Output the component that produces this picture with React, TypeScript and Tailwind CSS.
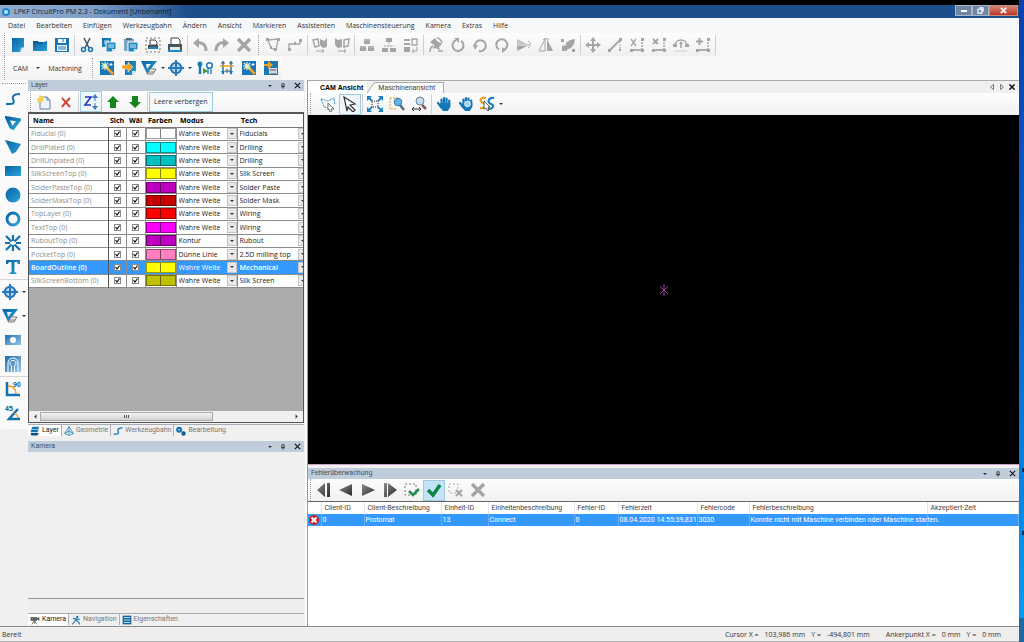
import { useState, type ReactNode } from "react";
import { clsx } from "clsx";

type IconProps = { children: ReactNode; className?: string };

function Icon({ children, className = "size-4" }: IconProps) {
  return (
    <svg viewBox="0 0 16 16" className={clsx("shrink-0", className)} fill="none" aria-hidden="true">
      {children}
    </svg>
  );
}

const BLUE = "url(#blue)";
const GRAY = "#a3a5a7";

// shared gradients
function Gradients() {
  return (
    <svg className="absolute size-0" aria-hidden="true">
      <defs>
        <linearGradient id="blue" x1="0" y1="0" x2="1" y2="1">
          <stop offset="0" stopColor="#0b62a4" />
          <stop offset="1" stopColor="#2aa3d8" />
        </linearGradient>
        <linearGradient id="pale" x1="0" y1="0" x2="1" y2="1">
          <stop offset="0" stopColor="#1b6fb0" />
          <stop offset="1" stopColor="#9cc4e2" />
        </linearGradient>
        <linearGradient id="metal" x1="0" y1="0" x2="1" y2="1">
          <stop offset="0" stopColor="#8a8a8a" />
          <stop offset="1" stopColor="#2c2c2c" />
        </linearGradient>
      </defs>
    </svg>
  );
}

const icons = {
  newDoc: (
    <>
      <path d="M2 1h12v9l-4 5H2z" fill={BLUE} />
      <path d="M10 15l1-4 3-1z" fill="#cfe6f4" />
    </>
  ),
  open: (
    <>
      <path d="M1 4h5l1 1h5l3-1v10H1z" fill="#0d5f96" />
      <path d="M1 7h9l2-2h3v9H1z" fill={BLUE} />
    </>
  ),
  save: (
    <>
      <path d="M1 1h14v14H1z" fill="#1777b5" />
      <path d="M4 2h8v4H4zM3 8h10v6H3z" fill="#f2f6f9" />
      <path d="M4 10h8M4 12h8M9 2v3" stroke="#1777b5" />
    </>
  ),
  cut: (
    <>
      <path d="M5 1l5 10M11 1L6 11" stroke="#4d565e" strokeWidth="1.6" />
      <circle cx="4.5" cy="12.5" r="2" stroke="#1777b5" strokeWidth="1.5" />
      <circle cx="11.5" cy="12.5" r="2" stroke="#1777b5" strokeWidth="1.5" />
    </>
  ),
  copy: (
    <>
      <path d="M1 1h9v9H1z" fill={BLUE} />
      <path d="M3 4h5M3 6h5" stroke="#cfe6f4" />
      <path d="M5 5h10v7l-3 3H5z" fill="#2189c4" stroke="#fff" />
      <path d="M7 8h6M7 10h6" stroke="#cfe6f4" />
      <path d="M11 15v-3h3z" fill="#e8f3fa" />
    </>
  ),
  paste: (
    <>
      <path d="M1 2h10v12H1z" fill="#7fa6c2" />
      <path d="M3 1h6v2H3z" fill="#4d6c82" />
      <path d="M5 5h10v7l-3 3H5z" fill="#2189c4" stroke="#fff" />
      <path d="M7 8h6M7 10h6" stroke="#cfe6f4" />
      <path d="M11 15v-3h3z" fill="#e8f3fa" />
    </>
  ),
  printSel: (
    <>
      <path d="M1 1h14v14H1z" stroke="#777" strokeDasharray="2 2" />
      <path d="M5 3h5l2 2v3H5z" fill="#fff" stroke="#444" />
      <path d="M3 8h10v4H3z" fill="#4b5358" />
      <path d="M4 10h8v2H4z" fill="#1f8ac6" />
    </>
  ),
  print: (
    <>
      <path d="M4 1h7l2 2v5H4z" fill="#fff" stroke="#444" />
      <path d="M1 7h14v7H1z" fill="#4b5358" />
      <path d="M3 10h10v3H3z" fill="#d8ecf7" />
      <path d="M1 13h14v2H1z" fill="#1f8ac6" />
    </>
  ),
  undo: (
    <>
      <path d="M1 6l6-5v10z" fill={GRAY} />
      <path d="M5 6c6-1 9 2 9 8" stroke={GRAY} strokeWidth="3" />
    </>
  ),
  redo: (
    <>
      <path d="M15 6L9 1v10z" fill={GRAY} />
      <path d="M11 6c-6-1-9 2-9 8" stroke={GRAY} strokeWidth="3" />
    </>
  ),
  cross: <path d="M2 2l12 12M14 2L2 14" stroke={GRAY} strokeWidth="3.5" />,
  poly: (
    <>
      <path d="M3 3l10-1-2 11-5-2z" stroke={GRAY} strokeWidth="1.3" />
      <path d="M1 1h3v3H1zM12 1h3v3h-3zM9 11h3v3H9zM5 9h2v3H5z" fill={GRAY} />
    </>
  ),
  step: (
    <>
      <path d="M2 12V7h11V3" stroke={GRAY} strokeWidth="1.3" />
      <path d="M1 11h3v3H1zM12 2h3v3h-3zM7 5h2v3H7z" fill={GRAY} />
    </>
  ),
  groupA: (
    <>
      <path d="M1 3l5-1 1 7-4 1z" stroke={GRAY} strokeWidth="1.5" />
      <path d="M8 2l4 2 3-3v9l-4 1-3-3z" fill={GRAY} />
      <path d="M4 14h8M10 12l2 2-2 2" stroke={GRAY} />
    </>
  ),
  groupB: (
    <>
      <path d="M1 1l3 2 4-1v8l-4 1-3-3z" fill={GRAY} />
      <path d="M10 3l5-1-1 7-4 1z" stroke={GRAY} strokeWidth="1.5" />
      <path d="M4 14h8M10 12l2 2-2 2" stroke={GRAY} />
    </>
  ),
  alignA: (
    <>
      <path d="M5 2h6v5H5zM1 9h6v5H1zM9 9h6v5H9z" fill={GRAY} />
      <path d="M5 3h6M1 10h6M9 10h6" stroke="#c4c4c4" />
    </>
  ),
  alignB: (
    <>
      <path d="M5 1h6v4H5zM1 11h6v4H1zM9 11h6v4H9z" fill={GRAY} />
      <path d="M8 5v4M3 9h10" stroke={GRAY} strokeDasharray="2 1" />
    </>
  ),
  alignC: (
    <>
      <path d="M1 2h6v2H1zM1 6h6v2H1zM1 10h6v5H1z" fill={GRAY} />
      <path d="M9 2h5v6H9z" stroke={GRAY} strokeWidth="1.3" />
      <path d="M14 10v4H9M11 12l-2 2 2 2" stroke={GRAY} />
    </>
  ),
  rotateFree: (
    <>
      <path d="M2 5l5-4 2 3 5 3-3 3 1 3-5-2-2 1 1-4z" fill={GRAY} />
      <path d="M2 15c0-3 1-5 3-6M9 1c3 0 4 2 5 5M10 14h5" stroke={GRAY} strokeWidth="1.5" />
    </>
  ),
  rotateCcw: (
    <>
      <path d="M6 3.300a5.500 5.500 0 1 0 5 .5" stroke={GRAY} strokeWidth="2" />
      <path d="M4 1h5v5z" fill={GRAY} />
    </>
  ),
  rotateCw: (
    <>
      <path d="M3 10a5.500 5.500 0 1 1 4 4" stroke={GRAY} strokeWidth="2" />
      <path d="M1 8h5l-3 5z" fill={GRAY} />
    </>
  ),
  rotate180: (
    <>
      <path d="M5 12.500a5.500 5.500 0 1 1 5 .3" stroke={GRAY} strokeWidth="2" />
      <path d="M8 10l4 3-4 3z" fill={GRAY} />
    </>
  ),
  flipV: (
    <>
      <path d="M1 2l10 5H1z" fill="#c4c5c6" />
      <path d="M1 14l10-5H1z" fill={GRAY} />
      <path d="M12 4c3 2 3 5 0 7M1 8h12" stroke={GRAY} />
    </>
  ),
  flipH: (
    <>
      <path d="M7 2v12H1z" stroke={GRAY} />
      <path d="M9 2v12h6z" fill={GRAY} />
      <path d="M5 3c1-2 5-2 6 0" stroke={GRAY} />
    </>
  ),
  scale: (
    <>
      <path d="M6 6l4-3 5-1-1 5-3 4-5 2z" fill={GRAY} />
      <path d="M1 2h3v3H1zM2 9l5-1v6H2zM12 12h3v3h-3z" fill={GRAY} />
    </>
  ),
  move: (
    <>
      <path d="M8 2v12M2 8h12" stroke={GRAY} strokeWidth="2" />
      <path d="M8 0l3 4H5zM8 16l3-4H5zM0 8l4-3v6zM16 8l-4-3v6z" fill={GRAY} />
    </>
  ),
  line: (
    <>
      <path d="M3 13L13 3" stroke={GRAY} strokeWidth="1.8" />
      <path d="M13 4v9" stroke={GRAY} strokeDasharray="2 1" />
      <path d="M1 12h3v3H1zM12 1h3v3h-3zM12 12h2v2h-2z" fill={GRAY} />
    </>
  ),
  nodeCut: (
    <>
      <path d="M2 2l5 7M7 2L2 9" stroke={GRAY} strokeWidth="1.3" />
      <path d="M2 13h11" stroke={GRAY} strokeWidth="1.8" />
      <path d="M13 2v10" stroke={GRAY} strokeWidth="1.5" strokeDasharray="2 1" />
      <path d="M1 12h3v3H1zM12 12h3v3h-3zM12 1h3v3h-3z" fill={GRAY} />
    </>
  ),
  nodeDel: (
    <>
      <path d="M2 2l5 5M7 2L2 7" stroke={GRAY} strokeWidth="1.8" />
      <path d="M2 13h11" stroke={GRAY} strokeWidth="1.8" />
      <path d="M13 2v10" stroke={GRAY} strokeWidth="1.5" strokeDasharray="2 1" />
      <path d="M1 12h3v3H1zM12 12h3v3h-3zM12 1h3v3h-3z" fill={GRAY} />
    </>
  ),
  arc: (
    <>
      <path d="M2 9c0-8 12-8 12 0M8 6v5" stroke={GRAY} strokeWidth="1.600" />
      <path d="M0 7h4v3H0zM12 7h4v3h-4zM6 7l2-3 2 3z" fill={GRAY} />
      <path d="M2 14h12" stroke="#ccc" />
    </>
  ),
  nodeAdd: (
    <>
      <path d="M4.500 1v7M1 4.500h7" stroke={GRAY} strokeWidth="2" />
      <path d="M2 13h11" stroke={GRAY} strokeWidth="1.8" />
      <path d="M13 2v10" stroke={GRAY} strokeWidth="1.5" strokeDasharray="2 1" />
      <path d="M1 12h3v3H1zM12 12h3v3h-3zM12 1h3v3h-3z" fill={GRAY} />
    </>
  ),
  wizard: (
    <>
      <path d="M1 1h14v14H1z" fill="#1877b4" />
      <path d="M7 7l7 7" stroke="#f0a52c" strokeWidth="2.500" />
      <path d="M6 2v8M2 6h8M3 3l6 6M9 3L3 9" stroke="#e6f3c8" strokeWidth="1.200" />
      <path d="M12 3v3M10.500 4.500h3" stroke="#fff" />
    </>
  ),
  importDoc: (
    <>
      <path d="M4 1h11v10l-4 4H4z" fill={BLUE} />
      <path d="M11 15v-4h4z" fill="#d6e9f5" />
      <path d="M1 5h6V2l5 5-5 5V9H1z" fill="#f2a024" stroke="#fff" strokeWidth=".5" />
    </>
  ),
  ruboutArea: (
    <>
      <path d="M0 1h16L6 14z" fill={BLUE} />
      <path d="M5 4h5L6 9z" fill="#e8f2f8" />
      <path d="M9 9h6l-3 5H6z" fill="#f5f5f5" stroke="#777" />
      <path d="M7 12h6" stroke="#777" />
    </>
  ),
  fiducial: (
    <>
      <circle cx="8" cy="8" r="5.200" fill="#bcd6ea" stroke="#2878b8" strokeWidth="2" />
      <path d="M8 0v16M0 8h16" stroke="#2878b8" strokeWidth="2" />
    </>
  ),
  toolPath: (
    <>
      <circle cx="3" cy="4" r="2.500" fill={BLUE} />
      <path d="M3 4v10" stroke="#1777b5" strokeWidth="2.500" />
      <path d="M6 8l5 3-5 3z" fill="#35a13a" />
      <path d="M11 14V9M14 14V9" stroke="#1777b5" strokeWidth="1.300" />
      <circle cx="12.500" cy="5.500" r="2.800" stroke="#1777b5" strokeWidth="1.500" />
    </>
  ),
  spindle: (
    <>
      <path d="M4 1v13M12 1v13" stroke="#1777b5" strokeWidth="1.500" />
      <path d="M1 6h14" stroke="#f09c20" strokeWidth="1.500" />
      <path d="M2 3h4M10 3h4M6 11h5M8 9v4" stroke="#555" />
      <path d="M2 11h4l-2 4zM10 11h4l-2 4z" fill="#1777b5" />
    </>
  ),
  exportBoard: (
    <>
      <path d="M1 1h14v14H1z" fill="#1877b4" />
      <path d="M6 8h8v6H6z" fill="#d5dade" />
      <path d="M1 4h4V1l5 4-5 4V6H1z" fill="#f2a024" />
      <path d="M7 10h6M7 14h6" stroke="#555" />
    </>
  ),
  curve: <path d="M1 13h4c5 0 4-3 3-5s0-5 7-5" stroke="#1372ad" strokeWidth="2" />,
  polyOpen: <path d="M2 3l12 2-6 8-2-1z" stroke={BLUE} strokeWidth="3.500" />,
  polyFill: <path d="M0 1l16 4-5 8-4 2z" fill={BLUE} />,
  rect: <path d="M0 3h16v10H0z" fill={BLUE} />,
  disc: <circle cx="8" cy="8" r="7.500" fill={BLUE} />,
  ring: <circle cx="8" cy="8" r="6" stroke={BLUE} strokeWidth="3" />,
  burst: (
    <>
      <path d="M8 0v6M8 10v6M0 8h5M11 8h5" stroke="#1172ad" strokeWidth="2.200" />
      <path d="M1 1l5.500 5.500M9.500 9.500L15 15M15 1L9.500 6.500M6.500 9.500L1 15" stroke="#1172ad" strokeWidth="2.200" />
    </>
  ),
  text: <path d="M1 1h14v4h-2l-1-2H9.500v10l2 1v1h-7v-1l2-1V3H4L3 5H1z" fill={BLUE} />,
  pocket: (
    <>
      <path d="M0 3h16v10H0z" fill="url(#pale)" />
      <circle cx="8" cy="8" r="3" fill="#fff" />
    </>
  ),
  contour: (
    <>
      <path d="M0 0h16v16H0z" fill="url(#pale)" />
      <path d="M3 16V7a5 5 0 0 1 10 0v9M6.500 16v-6a3 3 0 1 1 3 0v6" stroke="#fff" />
    </>
  ),
  angle90: (
    <>
      <path d="M2 1v13h13" stroke="#1372ad" strokeWidth="2.500" />
      <path d="M3 5c5 0 8 3 8 8" stroke="#f09c20" strokeWidth="1.300" />
      <text x="8" y="6" fontSize="7" fontWeight="700" fontFamily="Liberation Sans, sans-serif" fill="#14587f">90</text>
    </>
  ),
  angle45: (
    <>
      <path d="M13 4L4 14h11" stroke="#1372ad" strokeWidth="2.500" />
      <path d="M9 8c3 1 4 3 4 5" stroke="#f09c20" strokeWidth="1.300" />
      <text x="0" y="6" fontSize="7" fontWeight="700" fontFamily="Liberation Sans, sans-serif" fill="#14587f">45</text>
    </>
  ),
  newLayer: (
    <>
      <path d="M4 3h7l3 3v9H4z" fill="#eef3fb" stroke="#6b7ea8" />
      <path d="M11 3v3h3" stroke="#6b7ea8" />
      <path d="M4 0l1 3 3-1-1 3 2 1-3 1v3L4 8 1 9l1-3-2-1 3-1z" fill="#f4d34a" />
    </>
  ),
  deleteRed: <path d="M4 4c2 2 5 6 8 9M12 4C9 7 6 10 4 13" stroke="#d43a26" strokeWidth="1.800" />,
  sort: (
    <>
      <path d="M2 3h6L2 11h6" stroke="#2233c8" strokeWidth="1.600" />
      <path d="M12 2v12" stroke="#3b78c8" strokeDasharray="5 2" />
      <path d="M12 0l3 4H9zM12 16l3-4H9z" fill="#3b78c8" />
    </>
  ),
  up: <path d="M8 2l6 6h-3v6H5V8H2z" fill="#12861a" />,
  down: <path d="M8 14l6-6h-3V2H5v6H2z" fill="#12861a" />,
  lassoPick: (
    <>
      <path d="M1 3l7 2 6-3 1 7M1 3l3 8 5 1" stroke="#2d8fc4" strokeDasharray="2 1" />
      <path d="M8 7l6 6h-3l1 2-2 1-1-3-1 1z" fill="#fff" stroke="#555" strokeWidth=".8" />
    </>
  ),
  pointer: <path d="M2 1l11 7-5 1 5 5-2 2-5-5-1 4z" fill="#fff" stroke="#333" strokeWidth="1.200" />,
  fit: (
    <>
      <path d="M5 5h6v6H5z" stroke="#222" strokeDasharray="1 1" />
      <path d="M1 1l4 4M15 1l-4 4M1 15l4-4M15 15l-4-4" stroke="#1b80bd" strokeWidth="1.800" />
      <path d="M0 0h5L0 5zM16 0v5l-5-5zM0 16v-5l5 5zM16 16h-5l5-5z" fill="#1b80bd" />
    </>
  ),
  zoomSel: (
    <>
      <path d="M1 2h8M1 2v11h7" stroke="#e0a238" strokeDasharray="2 1" />
      <path d="M11 9l4 5" stroke="#5a6a78" strokeWidth="2.500" />
      <circle cx="9" cy="6" r="3.800" fill="#61b3e6" stroke="#3b7dad" />
    </>
  ),
  zoomWidth: (
    <>
      <path d="M11 9l4 4" stroke="#7c5a5a" strokeWidth="2.500" />
      <circle cx="9" cy="5" r="4" fill="#c4ddf0" stroke="#6c86a0" />
      <path d="M1 13h9M3 11l-2 2 2 2M8 11l2 2-2 2" stroke="#333" />
    </>
  ),
  hand: (
    <>
      <path d="M5.500 3.500V9M8 2v7M10.500 2.500V9M13.200 4.500V10M2 7l3 4" stroke="#1478b8" strokeWidth="2.200" strokeLinecap="round" />
      <path d="M4.500 7h9.800v4l-2.500 4H7l-3-4z" fill="#1478b8" />
    </>
  ),
  handZoom: (
    <>
      <path d="M5.500 3.500V9M8 2v7M10.500 2.500V9M13.200 4.500V10M2 7l3 4" stroke="#1478b8" strokeWidth="2.200" strokeLinecap="round" />
      <path d="M4.500 7h9.800v4l-2.500 4H7l-3-4z" fill="#1478b8" />
      <circle cx="9.500" cy="8" r="2.800" fill="#9fd2f2" stroke="#e8f4fb" />
    </>
  ),
  snap: (
    <>
      <path d="M7 2C1 0 0 6 4 7s3 6-3 5" stroke="#f0a020" strokeWidth="2.200" />
      <path d="M15 2c-6-1-7 5-3 6s2 6-4 5" stroke="#1b80bd" strokeWidth="2.200" />
      <path d="M5 5l6 6H9l1 3-1 1-2-3-2 1z" fill="#fff" stroke="#333" strokeWidth=".8" />
    </>
  ),
  first: <path d="M1 8l8-7v14zM11 1h3v14h-3z" fill="url(#metal)" />,
  prev: <path d="M1 8l13-6v12z" fill="url(#metal)" />,
  next: <path d="M15 8L2 2v12z" fill="url(#metal)" />,
  last: <path d="M2 1h3v14H2zM6 1l9 7-9 7z" fill="url(#metal)" />,
  ackSel: (
    <>
      <path d="M1 2h11v11H1z" stroke="#777" strokeDasharray="2 2" />
      <path d="M5 9l4 4 6-6" stroke="#1d9150" strokeWidth="2.500" />
    </>
  ),
  ack: <path d="M2 8l5 5 7-10" stroke="#0b8547" strokeWidth="3.500" />,
  clearSel: (
    <>
      <path d="M1 2h9v9H1z" stroke="#aaa" strokeDasharray="2 2" />
      <path d="M8 8l6 6M14 8l-6 6" stroke={GRAY} strokeWidth="2.200" />
    </>
  ),
  layers: (
    <>
      <path d="M4 1h11l-2 4H2zM2 6h12l-2 4H1z" fill="#1474b0" />
      <path d="M1 11h13l-2 4H2z" fill="#0c4f80" />
    </>
  ),
  geometry: <path d="M8 1l7 11-7 3-7-3zM8 1v14M1 12l7-4 7 4" stroke="#2682bb" strokeWidth="1.300" />,
  gears: (
    <>
      <circle cx="5" cy="6" r="3" stroke="#1474b0" strokeWidth="3.500" />
      <circle cx="12" cy="12" r="2" stroke="#0c5688" strokeWidth="3" />
    </>
  ),
  camera: (
    <>
      <path d="M1 3h10v6H1zM11 5l4-2v6l-4-2z" fill="#555" />
      <path d="M7 9l-4 6M7 9l4 6M7 9v5" stroke="#555" strokeWidth="1.300" />
      <path d="M3 5h2M7 5h2" stroke="#eee" />
    </>
  ),
  navigate: (
    <>
      <circle cx="10" cy="3" r="2" fill="#2a7ab0" />
      <path d="M9 5L6 10l-4 5M7 8l5 3 2 4M3 5l6 2 5 0" stroke="#2a7ab0" strokeWidth="1.800" />
    </>
  ),
  properties: (
    <>
      <path d="M1 1h14v14H1z" fill="#14689f" />
      <path d="M3 4h10M3 8h10M3 12h10" stroke="#bfe0f2" strokeWidth="1.500" />
    </>
  ),
};

type IconName = keyof typeof icons;
type Item = { icon: IconName; label: string; menu?: boolean; active?: boolean } | "sep" | "grip";

const mainTools: Item[] = [
  { icon: "newDoc", label: "Neu" },
  { icon: "open", label: "Öffnen" },
  { icon: "save", label: "Speichern" },
  "sep",
  { icon: "cut", label: "Ausschneiden" },
  { icon: "copy", label: "Kopieren" },
  { icon: "paste", label: "Einfügen" },
  { icon: "printSel", label: "Auswahl drucken" },
  { icon: "print", label: "Drucken" },
  "sep",
  { icon: "undo", label: "Rückgängig" },
  { icon: "redo", label: "Wiederholen" },
  { icon: "cross", label: "Löschen" },
  "grip",
  { icon: "poly", label: "Polygon" },
  { icon: "step", label: "Linienzug" },
  "sep",
  { icon: "groupA", label: "Gruppieren" },
  { icon: "groupB", label: "Gruppe auflösen" },
  "sep",
  { icon: "alignA", label: "Ausrichten" },
  { icon: "alignB", label: "Verteilen" },
  { icon: "alignC", label: "Anordnen" },
  "sep",
  { icon: "rotateFree", label: "Frei drehen" },
  { icon: "rotateCcw", label: "Links drehen" },
  { icon: "rotateCw", label: "Rechts drehen" },
  { icon: "rotate180", label: "Um 180° drehen" },
  { icon: "flipV", label: "Vertikal spiegeln" },
  { icon: "flipH", label: "Horizontal spiegeln" },
  { icon: "scale", label: "Skalieren" },
  "sep",
  { icon: "move", label: "Verschieben" },
  { icon: "line", label: "Linie" },
  { icon: "nodeCut", label: "Trennen" },
  { icon: "nodeDel", label: "Punkt löschen" },
  { icon: "arc", label: "Bogen" },
  { icon: "nodeAdd", label: "Punkt hinzufügen" },
  "sep",
];

const camTools: Item[] = [
  { icon: "wizard", label: "Prozessplanung" },
  { icon: "importDoc", label: "Import" },
  { icon: "ruboutArea", label: "Rubout", menu: true },
  { icon: "fiducial", label: "Passermarke", menu: true },
  { icon: "toolPath", label: "Werkzeugbahn" },
  { icon: "spindle", label: "Werkzeuge" },
  { icon: "wizard", label: "Bearbeitungsassistent" },
  { icon: "exportBoard", label: "Export" },
];

const viewTools: Item[] = [
  { icon: "lassoPick", label: "Lasso" },
  { icon: "pointer", label: "Auswahl", active: true },
  "sep",
  { icon: "fit", label: "Einpassen" },
  { icon: "zoomSel", label: "Bereich zoomen" },
  { icon: "zoomWidth", label: "Breite zoomen" },
  "sep",
  { icon: "hand", label: "Schwenken" },
  { icon: "handZoom", label: "Zoomen" },
  { icon: "snap", label: "Fangen", menu: true },
];

const errorTools: Item[] = [
  { icon: "first", label: "Erster" },
  { icon: "prev", label: "Voriger" },
  { icon: "next", label: "Nächster" },
  { icon: "last", label: "Letzter" },
  { icon: "ackSel", label: "Auswahl akzeptieren" },
  { icon: "ack", label: "Alle akzeptieren", active: true },
  { icon: "clearSel", label: "Auswahl entfernen" },
  { icon: "cross", label: "Alle entfernen" },
];

const drawTools: Item[] = [
  { icon: "curve", label: "Kurve" },
  { icon: "polyOpen", label: "Polygon offen" },
  { icon: "polyFill", label: "Polygon gefüllt" },
  { icon: "rect", label: "Rechteck" },
  { icon: "disc", label: "Scheibe" },
  { icon: "ring", label: "Kreis" },
  { icon: "burst", label: "Pad" },
  { icon: "text", label: "Text" },
  "sep",
  { icon: "fiducial", label: "Passermarke", menu: true },
  { icon: "ruboutArea", label: "Rubout", menu: true },
  { icon: "pocket", label: "Tasche" },
  { icon: "contour", label: "Kontur" },
  "sep",
  { icon: "angle90", label: "Winkel 90" },
  { icon: "angle45", label: "Winkel 45" },
];

const menus = [
  "Datei", "Bearbeiten", "Einfügen", "Werkzeugbahn", "Ändern", "Ansicht",
  "Markieren", "Assistenten", "Maschinensteuerung", "Kamera", "Extras", "Hilfe",
];

const layers = [
  { name: "Fiducial", color: "#ffffff", mode: "Wahre Weite", tech: "Fiducials" },
  { name: "DrillPlated", color: "#00ffff", mode: "Wahre Weite", tech: "Drilling" },
  { name: "DrillUnplated", color: "#00c0c0", mode: "Wahre Weite", tech: "Drilling" },
  { name: "SilkScreenTop", color: "#ffff00", mode: "Wahre Weite", tech: "Silk Screen" },
  { name: "SolderPasteTop", color: "#c000c0", mode: "Wahre Weite", tech: "Solder Paste" },
  { name: "SolderMaskTop", color: "#c80000", mode: "Wahre Weite", tech: "Solder Mask" },
  { name: "TopLayer", color: "#ff0000", mode: "Wahre Weite", tech: "Wiring" },
  { name: "TextTop", color: "#ff00ff", mode: "Wahre Weite", tech: "Wiring" },
  { name: "RuboutTop", color: "#c000c0", mode: "Kontur", tech: "Rubout" },
  { name: "PocketTop", color: "#ff80c0", mode: "Dünne Linie", tech: "2.5D milling top" },
  { name: "BoardOutline", color: "#ffff00", mode: "Wahre Weite", tech: "Mechanical" },
  { name: "SilkScreenBottom", color: "#c0c000", mode: "Wahre Weite", tech: "Silk Screen" },
];

const errorColumns = [
  { title: "", width: "w-[13px]", value: "" },
  { title: "Client-ID", width: "w-[43px]", value: "0" },
  { title: "Client-Beschreibung", width: "w-[77px]", value: "Protomat" },
  { title: "Einheit-ID", width: "w-[47px]", value: "13" },
  { title: "Einheitenbeschreibung", width: "w-[86px]", value: "Connect" },
  { title: "Fehler-ID", width: "w-[44px]", value: "0" },
  { title: "Fehlerzeit", width: "w-[79px]", value: "08.04.2020 14:55:39,831" },
  { title: "Fehlercode", width: "w-[52px]", value: "3030" },
  { title: "Fehlerbeschreibung", width: "w-[178px]", value: "Konnte nicht mit Maschine verbinden oder Maschine starten." },
  { title: "Akzeptiert-Zeit", width: "", value: "" },
];

function Caret() {
  return (
    <svg viewBox="0 0 4 2" className="h-0.5 w-1 shrink-0" aria-hidden="true">
      <path d="M0 0h4L2 2z" fill="#333" />
    </svg>
  );
}

function Grip() {
  return <span className="mx-0.5 w-px self-stretch border-l border-dotted border-gray-400" />;
}

function ToolButton({ item }: { item: Exclude<Item, string> }) {
  return (
    <button
      type="button"
      aria-label={item.label}
      className={clsx(
        "flex h-[21px] shrink-0 items-center justify-center",
        item.menu ? "w-[27px] gap-1" : "w-[22px]",
        item.active && "border border-[#9ecbe0]",
        item.active && (item.icon === "ack" ? "bg-[#c4e2f8]" : "bg-[#eef6fb]")
      )}
    >
      <Icon className="size-4">{icons[item.icon]}</Icon>
      {item.menu && <Caret />}
    </button>
  );
}

function Tools({ items }: { items: Item[] }) {
  return (
    <>
      {items.map((item, i) => {
        if (item === "sep") return <span key={i} className="mx-px h-5 w-px shrink-0 bg-[#cfd2d4]" />;
        if (item === "grip") return <span key={i} className="mx-[3px] h-5 w-px border-l border-dotted border-gray-400" />;
        return <ToolButton key={i} item={item} />;
      })}
    </>
  );
}

function PanelHeader({ title }: { title: string }) {
  return (
    <header className="flex h-[11px] shrink-0 items-center bg-[#bfccd9] px-[3px] text-[#45525e]">
      <h2 className="flex-1 font-['Roboto',sans-serif] text-[7px]">{title}</h2>
      <div className="flex items-center gap-2">
        <button type="button" aria-label="Menü" className="flex h-2 w-1 items-center">
          <Caret />
        </button>
        <button type="button" aria-label="Anheften">
          <Icon className="size-[6px]">
            <path d="M5 2h6v7H5zM3 10h10M8 10v5" stroke="#222" strokeWidth="2" />
          </Icon>
        </button>
        <button type="button" aria-label="Schließen">
          <Icon className="size-[7px]">
            <path d="M2 2l12 12M14 2L2 14" stroke="#111" strokeWidth="2.500" />
          </Icon>
        </button>
      </div>
    </header>
  );
}

function CheckBox({ label }: { label: string }) {
  return (
    <span className="grid place-items-center">
      <input
        type="checkbox"
        defaultChecked
        aria-label={label}
        className="peer col-start-1 row-start-1 size-[7px] appearance-none border border-[#8a8a8a] bg-white"
      />
      <svg viewBox="0 0 7 7" className="pointer-events-none invisible col-start-1 row-start-1 size-[7px] peer-checked:visible" fill="none">
        <path d="M1.500 3l1.500 2 2.500-3.500" stroke="#111" strokeWidth="1.200" />
      </svg>
    </span>
  );
}

function CellSelect({ value, label }: { value: string; label: string }) {
  return (
    <span className="flex h-3 items-center">
      <select aria-label={label} defaultValue={value} className="min-w-0 flex-1 appearance-none bg-transparent pl-0.5">
        <option className="text-black">{value}</option>
      </select>
      <span className="flex h-[11px] w-[10px] shrink-0 items-center justify-center border border-[#c5c5c5] bg-[#e9e9e9]">
        <Caret />
      </span>
    </span>
  );
}

function LayerTable() {
  const [selected, setSelected] = useState("BoardOutline");
  return (
    <table className="h-[174px] w-full table-fixed border-collapse bg-white text-left text-[7px] leading-[9px]">
      <thead>
        <tr className="h-[13px] border-b border-[#777] bg-[#fbfbfb] text-black">
          <th className="w-[79px] pl-1">Name</th>
          <th className="w-[18px] whitespace-nowrap pl-0.5">Sich</th>
          <th className="w-[19px] whitespace-nowrap pl-[3px]">Wäl</th>
          <th className="w-[31px] pl-[3px]">Farben</th>
          <th className="w-[61px] pl-1">Modus</th>
          <th className="pl-1">Tech</th>
        </tr>
      </thead>
      <tbody>
        {layers.map((layer) => {
          const active = layer.name === selected;
          return (
            <tr
              key={layer.name}
              onClick={() => setSelected(layer.name)}
              className={clsx("border-b border-[#8c8c8c]", active ? "bg-[#3399ff] text-white" : "text-[#222]")}
            >
              <td className={clsx("border-r border-[#555] pl-0.5", active ? "font-semibold" : "text-[#8e8e8e]")}>
                {layer.name} (0)
              </td>
              <td className="border-r border-[#8c8c8c]"><CheckBox label={`${layer.name} sichtbar`} /></td>
              <td className="border-r border-[#8c8c8c]"><CheckBox label={`${layer.name} wählbar`} /></td>
              <td className="border-r border-[#8c8c8c]">
                <span className="flex h-[11px] divide-x divide-black/50 border border-black/40" style={{ backgroundColor: layer.color }}>
                  <span className="flex-1" />
                  <span className="flex-1" />
                </span>
              </td>
              <td className="border-r border-[#8c8c8c]"><CellSelect value={layer.mode} label={`${layer.name} Modus`} /></td>
              <td className={clsx("overflow-hidden", active && "font-semibold")}>
                <span className="-mr-[5px] block"><CellSelect value={layer.tech} label={`${layer.name} Tech`} /></span>
              </td>
            </tr>
          );
        })}
      </tbody>
    </table>
  );
}

type Tab = { icon: IconName; label: string };

function BottomTabs({ tabs }: { tabs: Tab[] }) {
  return (
    <div className="flex h-3 shrink-0 border-t border-[#a9adb1] font-['Roboto',sans-serif] text-[7px]">
      {tabs.map((tab, i) => (
        <button
          key={tab.label}
          type="button"
          className={clsx(
            "flex items-center gap-0.5 whitespace-nowrap border-r border-[#b0b0b0] px-0.5",
            i === 0 ? "bg-white text-[#222]" : "text-[#777]",
            i === tabs.length - 1 && "border-r-0"
          )}
        >
          <Icon className="size-[10px]">{icons[tab.icon]}</Icon>
          {tab.label}
        </button>
      ))}
    </div>
  );
}

function LeftPanels() {
  return (
    <div className="flex w-[277px] shrink-0 flex-col pr-px">
      <PanelHeader title="Layer" />
      <div className="flex h-[21px] shrink-0 items-center bg-gradient-to-b from-white to-[#f3f3f3]">
        <Grip />
        <Tools
          items={[
            { icon: "newLayer", label: "Neuer Layer" },
            { icon: "deleteRed", label: "Layer löschen" },
            "sep",
            { icon: "sort", label: "Sortieren", active: true },
            { icon: "up", label: "Nach oben" },
            { icon: "down", label: "Nach unten" },
            "sep",
          ]}
        />
        <button type="button" className="h-5 border border-[#9ecbe0] bg-[#f4f9fc] px-1 text-[7px]">
          Leere verbergen
        </button>
      </div>
      <div className="flex flex-1 flex-col border border-t-2 border-[#555] bg-[#ababab]">
        <LayerTable />
        <div className="mt-auto flex h-[11px] items-center bg-[#f0f0f0] px-1">
          <button type="button" aria-label="Nach links" className="w-[7px]">
            <Icon className="size-[5px]"><path d="M11 1L4 8l7 7z" fill="#333" /></Icon>
          </button>
          <div className="flex flex-1">
            <div className="flex h-[9px] w-[68%] items-center justify-center gap-px border border-[#aaa] bg-gradient-to-b from-[#f4f4f4] to-[#d2d2d2]">
              <span className="h-[3px] w-px bg-[#555]" />
              <span className="h-[3px] w-px bg-[#555]" />
              <span className="h-[3px] w-px bg-[#555]" />
            </div>
          </div>
          <button type="button" aria-label="Nach rechts">
            <Icon className="size-[5px]"><path d="M5 1l7 7-7 7z" fill="#333" /></Icon>
          </button>
        </div>
      </div>
      <div className="pt-px">
        <BottomTabs
          tabs={[
            { icon: "layers", label: "Layer" },
            { icon: "geometry", label: "Geometrie" },
            { icon: "curve", label: "Werkzeugbahn" },
            { icon: "gears", label: "Bearbeitung" },
          ]}
        />
      </div>
      <section className="mt-[5px] flex h-[185px] shrink-0 flex-col pb-px">
        <PanelHeader title="Kamera" />
        <div className="flex-1 border-b border-[#999]" />
        <div className="h-[14px] bg-[#f0eded]" />
        <BottomTabs
          tabs={[
            { icon: "camera", label: "Kamera" },
            { icon: "navigate", label: "Navigation" },
            { icon: "properties", label: "Eigenschaften" },
          ]}
        />
      </section>
    </div>
  );
}

function ErrorTable() {
  return (
    <table className="w-full table-fixed border-collapse text-left font-['Roboto',sans-serif] text-[7px] leading-[9px]">
      <thead>
        <tr className="h-3 text-[#444]">
          {errorColumns.map((col) => (
            <th key={col.title} className={clsx("whitespace-nowrap border-r border-[#e5e5e5] pl-[3px] font-normal", col.width)}>
              {col.title}
            </th>
          ))}
        </tr>
      </thead>
      <tbody>
        <tr className="h-3 bg-[#3399ff] text-white">
          {errorColumns.map((col, i) => (
            <td key={col.title} className="whitespace-nowrap border-r border-[#66b0fb] pl-px">
              {i === 0 ? (
                <Icon className="size-[10px]">
                  <circle cx="8" cy="8" r="8" fill="#cf2020" />
                  <path d="M4 4l8 8M12 4l-8 8" stroke="#fff" strokeWidth="3" />
                </Icon>
              ) : (
                col.value
              )}
            </td>
          ))}
        </tr>
      </tbody>
    </table>
  );
}

function Workspace() {
  return (
    <main className="flex min-w-0 flex-1 flex-col border-l border-[#9a9a9a]">
      {/* View tabs */}
      <div className="flex h-[13px] shrink-0 items-end border-t border-[#aaa] bg-[#f0f0f0] font-['Roboto',sans-serif] text-[7px]">
        <button type="button" className="flex h-3 items-center bg-white pl-3 pr-1 font-['Liberation_Sans',sans-serif] text-[7px] font-bold text-black">
          CAM Ansicht
        </button>
        <button type="button" className="flex h-[11px] items-center">
          <svg viewBox="0 0 9 11" className="h-[11px] w-[9px]" fill="#fafafa" aria-hidden="true">
            <path d="M0 11L7 1l2-.5V11z" />
            <path d="M0 11L7 1l2-.5" stroke="#aaa" fill="none" />
          </svg>
          <span className="flex h-full items-center border-r border-t border-[#aaa] bg-[#fafafa] pl-0.5 pr-2 text-[#444]">
            Maschinenansicht
          </span>
        </button>
        <div className="ml-auto flex h-full items-center gap-1 pr-1">
          <button type="button" aria-label="Zurück">
            <Icon className="size-[6px]"><path d="M12 1v14L4 8z" stroke="#555" strokeWidth="2" /></Icon>
          </button>
          <button type="button" aria-label="Vor">
            <Icon className="size-[6px]"><path d="M4 1v14l8-7z" stroke="#555" strokeWidth="2" /></Icon>
          </button>
          <button type="button" aria-label="Ansicht schließen">
            <Icon className="size-[6px]"><path d="M1 1l14 14M15 1L1 15" stroke="#111" strokeWidth="4" /></Icon>
          </button>
        </div>
      </div>
      <div className="flex h-[22px] shrink-0 items-center bg-gradient-to-b from-[#fdfdfd] to-[#f1f1f1]">
        <Grip />
        <span className="w-1" />
        <Tools items={viewTools} />
      </div>

      {/* Drawing canvas */}
      <div className="grid min-h-0 flex-1 place-items-center border-b border-[#c9a3c6] bg-black">
        <svg viewBox="0 0 10 12" className="h-3 w-2.5" aria-label="Ankerpunkt">
          <path d="M5 0v12M1 2l8 8M9 2l-8 8" stroke="#a03aa0" />
        </svg>
      </div>

      <section className="mt-[3px] flex h-[158px] shrink-0 flex-col">
        <PanelHeader title="Fehlerüberwachung" />
        <div className="flex h-[22px] shrink-0 items-center bg-gradient-to-b from-[#fdfdfd] to-[#f1f1f1]">
          <Grip />
          <Tools items={errorTools} />
        </div>
        <div className="flex-1 border-t border-[#666] bg-white">
          <ErrorTable />
        </div>
      </section>
    </main>
  );
}

export default function App() {
  return (
    <div className="flex h-screen overflow-hidden bg-black font-['Open_Sans','Noto_Sans',sans-serif] text-[7px] leading-[9px] text-[#333]">
      <Gradients />
      <div className="flex min-w-0 flex-1 flex-col pt-[5px]">
        {/* Title bar */}
        <header className="flex h-[13px] shrink-0 items-center justify-between bg-[#1d4f8c]">
          <div className="flex h-full items-center gap-1 bg-gradient-to-r from-[#8facd0] via-[#7f9fc8] to-[#1d4f8c] pl-0.5 pr-4">
            <span className="size-2 rounded-sm border-2 border-[#1c86c8] bg-[#bfe3f7]" />
            <h1 className="text-[7px] text-[#0c1c30]">LPKF CircuitPro PM 2.3 - Dokument [Unbenannt]</h1>
          </div>
          <div className="flex h-[11px] self-start text-white">
            <button type="button" aria-label="Minimieren" className="flex w-[17px] items-center justify-center border border-[#a9b8c8] bg-[#6f87a3]">
              <span className="h-0.5 w-1.5 bg-white" />
            </button>
            <button type="button" aria-label="Wiederherstellen" className="flex w-[17px] items-center justify-center border border-[#a9b8c8] bg-[#6f87a3]">
              <Icon className="size-[7px]"><path d="M5 2h9v9M2 5h9v9H2z" stroke="#fff" strokeWidth="2.500" /></Icon>
            </button>
            <button type="button" aria-label="Beenden" className="mr-px flex w-[29px] items-center justify-center border border-[#c98a80] bg-gradient-to-b from-[#d08478] to-[#bd3521]">
              <Icon className="size-[7px]"><path d="M2 2l12 12M14 2L2 14" stroke="#fff" strokeWidth="4" /></Icon>
            </button>
          </div>
        </header>

        <nav className="flex h-[15px] shrink-0 items-center gap-[11px] bg-[#f7f8f9] pl-2">
          {menus.map((menu) => (
            <button key={menu} type="button" className="whitespace-nowrap">{menu}</button>
          ))}
        </nav>

        <div className="bg-[#f7f7f7]">
          <div className="flex h-[23px] w-fit items-center bg-gradient-to-b from-[#fdfdfd] to-[#f0f0f0] pl-0.5">
            <Grip />
            <Tools items={mainTools} />
          </div>
          <div className="flex h-6 w-fit items-center bg-gradient-to-b from-[#fdfdfd] to-[#f2f2f2] pl-0.5">
            <Grip />
            <button type="button" className="flex items-center gap-2 pl-1.5">
              CAM <Caret />
            </button>
            <button type="button" className="pl-2 pr-2.5">Machining</button>
            <span className="h-5 border-l border-dotted border-gray-400 pl-[3px]" />
            <Tools items={camTools} />
          </div>
        </div>

        <div className="flex min-h-0 flex-1 bg-[#f0f0f0]">
          {/* Drawing tools */}
          <aside className="w-7 shrink-0">
            <div className="flex flex-col rounded-b bg-[#fafafa] pb-1 pt-[3px]">
              <span className="mx-0.5 mb-[3px] border-t border-dotted border-gray-400" />
              {drawTools.map((item, i) =>
                typeof item === "string" ? (
                  <span key={i} className="h-px bg-[#d5d5d5]" />
                ) : (
                  <button
                    key={i}
                    type="button"
                    aria-label={item.label}
                    className={clsx("flex h-6 items-center gap-1", item.menu ? "pl-0.5" : "pl-[5px]")}
                  >
                    <Icon>{icons[item.icon]}</Icon>
                    {item.menu && <Caret />}
                  </button>
                )
              )}
            </div>
          </aside>
          <LeftPanels />
          <div className="w-0.5 shrink-0 bg-[#fafafa]" />
          <Workspace />
        </div>

        {/* Status bar */}
        <footer className="flex h-4 shrink-0 items-center justify-between border-b border-t border-b-[#b5b5b5] border-t-[#8a8a8a] bg-[#f0eded] pl-0.5 pr-[18px]">
          <span>Bereit</span>
          <div className="flex gap-4">
            <div className="flex gap-1.5">
              <span>Cursor X =</span>
              <span>103,986 mm</span>
              <span>Y =</span>
              <span>-494,801 mm</span>
            </div>
            <div className="flex gap-1.5">
              <span>Ankerpunkt X =</span>
              <span>0 mm</span>
              <span>Y =</span>
              <span>0 mm</span>
            </div>
          </div>
        </footer>
      </div>

      {/* Desktop visible beside the window */}
      <div className="flex w-[5px] shrink-0 flex-col bg-gradient-to-b from-[#0a3fb0] via-[#0a66d0] to-[#08a0f4]">
        <span className="ml-auto mt-[468px] h-1 w-0.5 bg-[#0c2c48]" />
        <span className="ml-auto mt-[59px] h-1 w-0.5 bg-[#0c2c48]" />
        <span className="mt-auto h-6 bg-[#1c6aa4]" />
      </div>
    </div>
  );
}
